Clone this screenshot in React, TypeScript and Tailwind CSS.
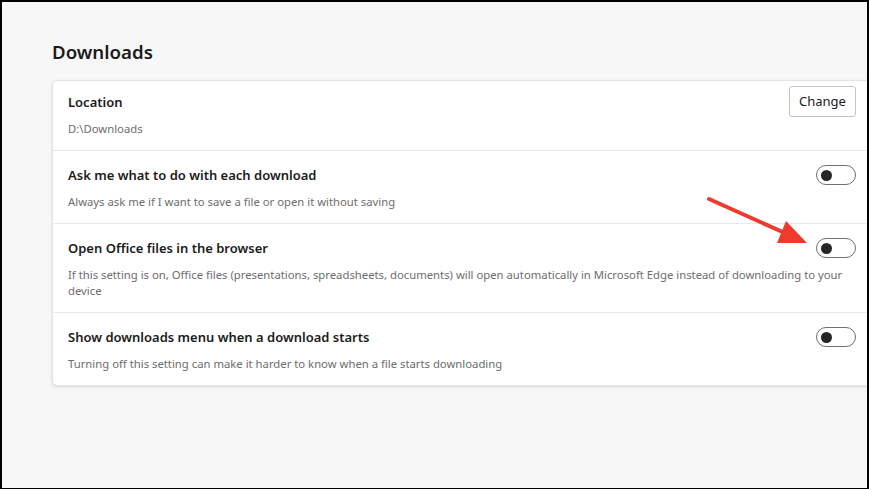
function Toggle() {
  return (
    <div className="flex h-5 w-10 shrink-0 items-center rounded-full border border-[#6e6e6e] bg-white px-[4px]">
      <div className="h-[11px] w-[11px] rounded-full bg-[#262626]" />
    </div>
  );
}

function SettingRow({
  title,
  desc,
  last,
}: {
  title: string;
  desc: string;
  last?: boolean;
}) {
  return (
    <div className={"pl-[15px] pr-4 pt-[14px] pb-[13px] " + (last ? "" : "border-b border-[#e8e8e8]")}>
      <div className="flex items-center justify-between">
        <p className="text-[13px] font-semibold leading-5 text-[#1b1b1b]">{title}</p>
        <Toggle />
      </div>
      <p className="mt-[9px] text-[11.3px] leading-4 text-[#6d6d6d]">{desc}</p>
    </div>
  );
}

export default function App() {
  return (
    <div
      className="relative h-[489px] w-[869px] overflow-hidden border-t-2 border-r-2 border-b border-l-2 border-black bg-[#f7f7f7]"
      style={{ fontFamily: '"Noto Sans", "Open Sans", sans-serif' }}
    >
      <div className="pl-[50px] pt-[38px]">
        <h1 className="text-[18.7px] font-semibold leading-6 text-[#1b1b1b]">Downloads</h1>
        <div className="mt-[16px] w-[821px] rounded-[5px] border border-[#e3e3e3] bg-white shadow-[0_1px_3px_rgba(0,0,0,0.12)]">
          <div className="flex items-start justify-between border-b border-[#e8e8e8] pl-[15px] pr-4 pt-[11px] pb-[13px]">
            <div>
              <p className="text-[13px] font-semibold leading-5 text-[#1b1b1b]">Location</p>
              <p className="mt-[9px] text-[11.3px] leading-4 text-[#6d6d6d]">D:\Downloads</p>
            </div>
            <button className="mt-[-6px] h-[31px] w-[67px] rounded-[3px] border border-[#c4c4c4] bg-white text-[13px] text-[#1b1b1b]">
              Change
            </button>
          </div>
          <SettingRow
            title="Ask me what to do with each download"
            desc="Always ask me if I want to save a file or open it without saving"
          />
          <SettingRow
            title="Open Office files in the browser"
            desc="If this setting is on, Office files (presentations, spreadsheets, documents) will open automatically in Microsoft Edge instead of downloading to your device"
          />
          <SettingRow
            title="Show downloads menu when a download starts"
            desc="Turning off this setting can make it harder to know when a file starts downloading"
            last
          />
        </div>
      </div>
      <svg
        className="pointer-events-none absolute left-0 top-0"
        width="869"
        height="489"
        viewBox="0 0 869 489"
      >
        <line x1="707" y1="197" x2="785" y2="232" stroke="#ef3b2d" strokeWidth="4" strokeLinecap="round" />
        <polygon points="805,241 775,241 784,219" fill="#ef3b2d" />
      </svg>
    </div>
  );
}
